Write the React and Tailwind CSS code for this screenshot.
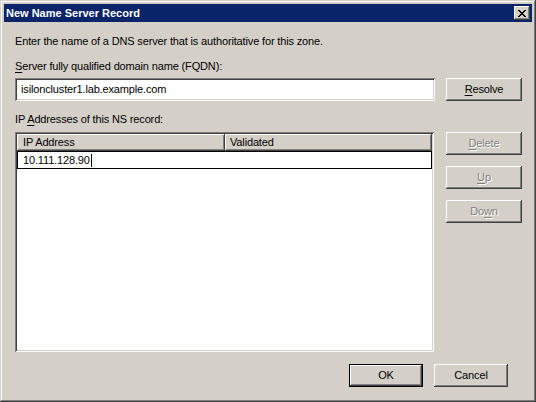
import React from 'react';

const raised =
  'shadow-[inset_-1px_-1px_#404040,inset_1px_1px_#ffffff,inset_-2px_-2px_#808080,inset_2px_2px_#d4d0c8]';
const sunken =
  'shadow-[inset_1px_1px_#808080,inset_-1px_-1px_#ffffff,inset_2px_2px_#404040,inset_-2px_-2px_#d4d0c8]';

function Btn({ children, disabled, isDefault, className = '' }) {
  const base = `flex items-center justify-center bg-[#d4d0c8] text-[11px] leading-[13px] ${className}`;
  if (isDefault) {
    return (
      <div className={`border border-black ${className}`}>
        <div className={`h-full w-full flex items-center justify-center ${raised} text-[11px] leading-[13px]`}>
          {children}
        </div>
      </div>
    );
  }
  return (
    <div
      className={`${base} ${raised} ${
        disabled ? 'text-[#808080] [text-shadow:1px_1px_0_#ffffff]' : 'text-black'
      }`}
    >
      {children}
    </div>
  );
}

export default function App() {
  return (
    <div
      className="w-[536px] h-[402px] bg-[#d4d0c8] p-[4px] text-black shadow-[inset_-1px_-1px_#404040,inset_1px_1px_#d4d0c8,inset_-2px_-2px_#808080,inset_2px_2px_#ffffff]"
      style={{ fontFamily: '"Liberation Sans", Arial, sans-serif' }}
    >
      {/* Title bar */}
      <div className="h-[18px] bg-[#0a246a] flex items-center justify-between pl-[2px] pr-[2px]">
        <span className="text-white font-bold text-[11px] leading-[13px]">New Name Server Record</span>
        <div className={`w-[16px] h-[14px] bg-[#d4d0c8] flex items-center justify-center ${raised}`}>
          <svg width="8" height="7" viewBox="0 0 8 7" shapeRendering="crispEdges">
            <path d="M0 0h2v1h-2zM6 0h2v1h-2zM1 1h2v1h-2zM5 1h2v1h-2zM2 2h4v1h-4zM3 3h2v1h-2zM2 4h4v1h-4zM1 5h2v1h-2zM5 5h2v1h-2zM0 6h2v1h-2zM6 6h2v1h-2z" fill="#000" />
          </svg>
        </div>
      </div>

      {/* Body */}
      <div className="pl-[11px] text-[11px] leading-[13px] tracking-[-0.15px]">
        <p className="mt-[13px]">Enter the name of a DNS server that is authoritative for this zone.</p>

        <p className="mt-[12px]">
          <span className="underline underline-offset-2">S</span>erver fully qualified domain name (FQDN):
        </p>

        <div className="mt-[5px] flex items-start gap-[11px]">
          <div className={`w-[420px] h-[23px] bg-white flex items-center pl-[6px] ${sunken}`}>
            isiloncluster1.lab.example.com
          </div>
          <Btn className="w-[76px] h-[23px]">
            <span>
              <span className="underline underline-offset-2">R</span>esolve
            </span>
          </Btn>
        </div>

        <p className="mt-[12px]">
          IP <span className="underline underline-offset-2">A</span>ddresses of this NS record:
        </p>

        <div className="mt-[6px] flex items-start gap-[12px]">
          {/* List */}
          <div className={`w-[419px] h-[220px] bg-white p-[2px] ${sunken}`}>
            <div className="flex h-[17px]">
              <div className={`w-[208px] h-full bg-[#d4d0c8] flex items-center pl-[6px] ${raised}`}>IP Address</div>
              <div className={`flex-1 h-full bg-[#d4d0c8] flex items-center pl-[5px] ${raised}`}>Validated</div>
            </div>
            <div className="h-[18px] border border-black flex items-center pl-[5px]">
              10.111.128.90<span className="inline-block w-[1px] h-[13px] bg-black ml-[1px]" />
            </div>
          </div>

          {/* Side buttons */}
          <div className="flex flex-col gap-[11px]">
            <Btn disabled className="w-[76px] h-[23px]">
              <span>
                <span className="underline underline-offset-2">D</span>elete
              </span>
            </Btn>
            <Btn disabled className="w-[76px] h-[23px]">
              <span>
                <span className="underline underline-offset-2">U</span>p
              </span>
            </Btn>
            <Btn disabled className="w-[76px] h-[23px]">
              <span>
                Do<span className="underline underline-offset-2">w</span>n
              </span>
            </Btn>
          </div>
        </div>

        <div className="mt-[12px] flex justify-end gap-[11px] pr-[24px]">
          <Btn isDefault className="w-[74px] h-[23px]">OK</Btn>
          <Btn className="w-[74px] h-[23px]">Cancel</Btn>
        </div>
      </div>
    </div>
  );
}
